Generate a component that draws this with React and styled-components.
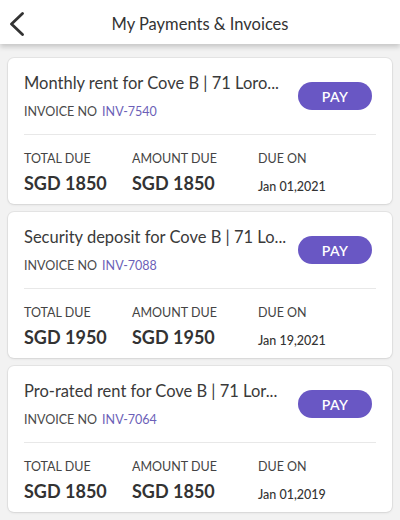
import React from 'react';
import styled, { createGlobalStyle } from 'styled-components';

const GlobalStyle = createGlobalStyle`
  body {
    margin: 0;
    background: #f2f2f2;
    font-family: Lato, "Open Sans", sans-serif;
    color: #333;
  }
`;

const invoices = [
  { title: 'Monthly rent for Cove B | 71 Loro...', no: 'INV-7540', total: 'SGD 1850', amount: 'SGD 1850', date: 'Jan 01,2021' },
  { title: 'Security deposit for Cove B | 71 Lo...', no: 'INV-7088', total: 'SGD 1950', amount: 'SGD 1950', date: 'Jan 19,2021' },
  { title: 'Pro-rated rent for Cove B | 71 Lor...', no: 'INV-7064', total: 'SGD 1850', amount: 'SGD 1850', date: 'Jan 01,2019' },
];

const Page = styled.div`
  width: 400px;
  height: 520px;
  overflow: hidden;
  background: #f2f2f2;
`;

const Header = styled.header`
  height: 44px;
  padding-top: 3px;
  box-sizing: border-box;
  background: #fff;
  display: grid;
  grid-template-columns: 44px 1fr 44px;
  align-items: center;
  box-shadow: 0 3px 5px rgba(0, 0, 0, 0.18);
  position: relative;
  z-index: 1;
`;

const Back = styled.button`
  border: 0;
  background: none;
  padding: 0 0 0 8px;
  height: 41px;
  display: flex;
  align-items: center;
`;

const Title = styled.h1`
  margin: 0;
  font-size: 16.5px;
  font-weight: 400;
  text-align: center;
  color: #333;
`;

const List = styled.div`
  display: flex;
  flex-direction: column;
  gap: 8px;
  padding: 14px 8px 0;
`;

const Card = styled.div`
  background: #fff;
  border-radius: 6px;
  box-shadow: 0 0 0 1px rgba(0, 0, 0, 0.05), 0 1px 3px rgba(0, 0, 0, 0.08);
  padding: 13px 16px 0 16px;
  height: 146px;
  box-sizing: border-box;
`;

const Top = styled.div`
  display: flex;
  justify-content: space-between;
  align-items: flex-start;
  padding-right: 4px;
  height: 63px;
  border-bottom: 1px solid #e8e8e8;
`;

const Name = styled.div`
  font-size: 16.5px;
  color: #3a3a3a;
  line-height: 24px;
  white-space: nowrap;
`;

const InvoiceRow = styled.div`
  margin-top: 8px;
  font-size: 12.5px;
  color: #4a4a4a;
  line-height: 18px;

  span {
    color: #6c5fb8;
    margin-left: 5px;
  }
`;

const PayButton = styled.button`
  margin-top: 11px;
  width: 74px;
  height: 28px;
  border: 0;
  border-radius: 14px;
  background: #6957c4;
  color: #fff;
  font-family: Lato, sans-serif;
  font-size: 14px;
  font-weight: 600;
  letter-spacing: 0.3px;
  flex-shrink: 0;
`;

const Stats = styled.div`
  display: grid;
  grid-template-columns: 108px 126px 1fr;
  padding-top: 15px;
`;

const Stat = styled.div`
  display: flex;
  flex-direction: column;
`;

const Label = styled.div`
  font-size: 12.5px;
  color: #444;
  line-height: 17px;
`;

const Value = styled.div`
  margin-top: 3px;
  height: 26px;
  display: flex;
  align-items: center;
  font-size: ${(p) => (p.small ? '12.5px' : '18px')};
  font-weight: ${(p) => (p.small ? 500 : 700)};
  padding-top: ${(p) => (p.small ? '3px' : '0')};
  color: #333;
`;

const App = () => (
  <Page>
    <GlobalStyle />
    <Header>
      <Back aria-label="back">
        <svg width="18" height="24" viewBox="0 0 18 24">
          <path d="M14.5 1.5 L3.5 12 L14.5 22.5" fill="none" stroke="#333" strokeWidth="2.8" strokeLinecap="round" strokeLinejoin="round" />
        </svg>
      </Back>
      <Title>My Payments &amp; Invoices</Title>
      <div />
    </Header>
    <List>
      {invoices.map((inv) => (
        <Card key={inv.no}>
          <Top>
            <div>
              <Name>{inv.title}</Name>
              <InvoiceRow>
                INVOICE NO<span>{inv.no}</span>
              </InvoiceRow>
            </div>
            <PayButton>PAY</PayButton>
          </Top>
          <Stats>
            <Stat>
              <Label>TOTAL DUE</Label>
              <Value>{inv.total}</Value>
            </Stat>
            <Stat>
              <Label>AMOUNT DUE</Label>
              <Value>{inv.amount}</Value>
            </Stat>
            <Stat>
              <Label>DUE ON</Label>
              <Value small>{inv.date}</Value>
            </Stat>
          </Stats>
        </Card>
      ))}
    </List>
  </Page>
);

export default App;
